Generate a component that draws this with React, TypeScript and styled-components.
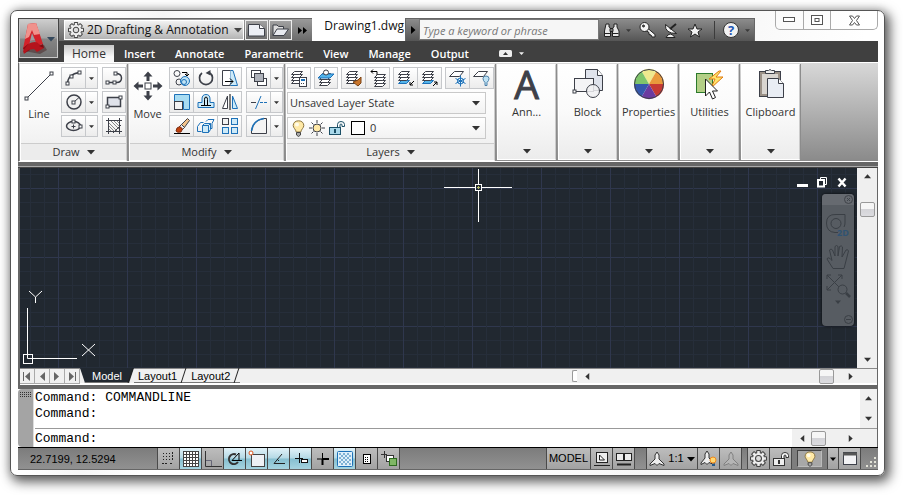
import React from "react";
import styled, { createGlobalStyle, css } from "styled-components";

const ui = `"Open Sans", "Noto Sans", sans-serif`;
const sys = `"Liberation Sans", Arial, sans-serif`;
const mono = `"Liberation Mono", "Courier New", monospace`;
const ink = "#3d4049";
const blue = "#1d71b8";

const GlobalStyle = createGlobalStyle`
  *, *::before, *::after { box-sizing: border-box; }
  body { margin: 0; background: #fff; font: 11px/16px ${ui}; color: #333; }
  button, input, select { font: inherit; color: inherit; margin: 0; padding: 0; border: 0; border-radius: 0; background: none; }
  svg { display: block; flex: none; }
`;

/* ---------- shell ---------- */

const Page = styled.div`
  display: flex;
  min-height: 100vh;
  padding: 10px 18px 19px 10px;
`;

const Frame = styled.main`
  flex: 1;
  min-width: 0;
  display: flex;
  flex-direction: column;
  padding: 0 6px 5px 7px;
  border: 1px solid #555;
  border-radius: 7px;
  background: linear-gradient(100deg, #fff 10%, #f6f6f6 16%, #fff 22%, #fff 60%, #f7f7f7 75%, #fff 90%);
  box-shadow: 3px 4px 12px 2px rgba(0, 0, 0, 0.62), 0 0 8px rgba(0, 0, 0, 0.12);
`;

const Header = styled.header`
  display: grid;
  grid-template-columns: 41px 1fr;
  grid-template-rows: 30px 21px;
`;

const AppButton = styled.button`
  grid-area: 1 / 1 / 3 / 2;
  z-index: 1;
  display: flex;
  align-items: center;
  justify-content: center;
  height: 41px;
  margin-top: 7px;
  border: 1px solid #444;
  box-shadow: inset 0 0 0 1px #c9c9c9;
  background: linear-gradient(#cfcfcf, #a2a2a2 48%, #858585 52%, #707070);
`;

const TitleRow = styled.div`
  grid-area: 1 / 2 / 2 / 3;
  display: flex;
  align-items: flex-end;
`;

const QuickBar = styled.div`
  display: flex;
  align-items: stretch;
  height: 23px;
  padding: 1px 0 1px 5px;
  border-top: 1px solid #666;
  background: linear-gradient(#9a9a9a, #6a6a6a);
`;

const SelectBox = styled.label<{ $look?: "bar" | "layer" }>`
  display: flex;
  align-items: center;
  height: 22px;
  margin-right: 8px;
  padding: 0 5px 0 2px;
  border: 1px solid #c9c9c9;
  background: linear-gradient(#fff, #f2f2f2);
  & > select {
    flex: 1;
    min-width: 0;
    appearance: none;
    outline: none;
  }
  ${(p) => p.$look === "layer" && "gap: 4px; padding-left: 4px;"}
  ${(p) =>
    p.$look === "bar" &&
    css`
      gap: 3px;
      width: 180px;
      height: 20px;
      margin: 0;
      padding: 0 1px 0 3px;
      border: 1px solid #fff;
      background: linear-gradient(#f2f2f2, #b4b4b4);
      color: #111;
      font-size: 12px;
    `}
`;

const BarButton = styled.button<{ $width?: number; $boxed?: boolean }>`
  display: flex;
  align-items: center;
  justify-content: center;
  width: ${(p) => p.$width ?? 20}px;
  ${(p) =>
    p.$boxed &&
    css`
      margin-left: 1px;
      border: 1px solid #eee;
      background: linear-gradient(#a2a2a2, #6e6e6e);
      width: 23px;
    `}
`;

const DocTitle = styled.h1`
  flex: 1;
  min-width: 0;
  margin: 0;
  height: 23px;
  padding-right: 1px;
  font: 400 12px/16px ${ui};
  color: #111;
  text-align: right;
  white-space: nowrap;
`;

const InfoBar = styled.div`
  display: flex;
  height: 23px;
  border: solid #666;
  border-width: 1px 1px 0 1px;
  background: linear-gradient(#8c8c8c, #555);
`;

const Search = styled.input`
  width: 180px;
  margin: 0 0 1px;
  padding: 3px 3px 0;
  border: 1px solid #777;
  background: #f6f6f6;
  outline: none;
  &::placeholder {
    color: #777;
    opacity: 1;
    font-style: italic;
  }
`;

const BarRule = styled.span`
  width: 1px;
  margin: 2px 6px;
  background: #3c3c3c;
`;

const WindowButtons = styled.div`
  align-self: flex-start;
  display: flex;
  height: 19px;
  margin-left: 20px;
  border: 1px solid #a9a9a9;
  border-top: 0;
  border-radius: 0 0 5px 5px;
`;

const WindowButton = styled.button<{ $wide?: boolean }>`
  display: flex;
  align-items: center;
  justify-content: center;
  width: ${(p) => (p.$wide ? 47 : 27)}px;
  & + & {
    border-left: 1px solid #a9a9a9;
  }
`;

const TabRow = styled.nav`
  grid-area: 2 / 1 / 3 / 3;
  display: flex;
  align-items: flex-end;
  padding-left: 46px;
  background: #404040;
`;

const RibbonTab = styled.button<{ $active?: boolean }>`
  height: 17px;
  padding: 0 10px;
  color: #fff;
  font-weight: 600;
  line-height: 17px;
  ${(p) =>
    p.$active &&
    css`
      padding: 0 8px;
      color: #333;
      font-weight: 400;
      font-size: 12px;
      background: linear-gradient(#c8c8c8, #f8f8f8 70%);
    `}
`;

const TabToggle = styled.button`
  display: flex;
  align-items: center;
  gap: 7px;
  height: 17px;
  margin-left: 20px;
`;

/* ---------- ribbon ---------- */

const Ribbon = styled.section`
  display: flex;
  gap: 2px;
  padding: 1px 0 0 1px;
  border: solid #fff;
  border-width: 1px 0;
  border-left: 1px solid #666;
  background: linear-gradient(#d8d8d8, #8a8a8a);
`;

const Panel = styled.section`
  display: flex;
  flex-direction: column;
  border: 1px solid #fff;
  border-right-color: #ccc;
  background: linear-gradient(#fff, #fafafa 50%, #ececec);
  box-shadow: 1px 0 0 #8c8c8c;
`;

const PanelBody = styled.div`
  display: flex;
  gap: 4px;
  height: 78px;
  padding: 2px 0 0;
`;

const PanelTitle = styled.button`
  display: flex;
  align-items: center;
  justify-content: center;
  gap: 7px;
  height: 17px;
  border-top: 1px solid #ccc;
  background: #ececec;
`;

const BigTool = styled.button<{ $width: number }>`
  display: flex;
  flex-direction: column;
  align-items: center;
  gap: 4px;
  width: ${(p) => p.$width}px;
  height: 60px;
  padding-top: 3px;
`;

const SlimPanel = styled.button`
  display: flex;
  flex-direction: column;
  align-items: center;
  width: 59px;
  height: 96px;
  padding: 3px 0 4px;
  border: 1px solid #fff;
  border-right-color: #ccc;
  background: linear-gradient(#fff, #fafafa 50%, #ececec);
  box-shadow: 1px 0 0 #8c8c8c;
  white-space: nowrap;
  & > span {
    margin-top: 4px;
  }
  & > svg:last-child {
    margin-top: auto;
  }
`;

const BigLetter = styled.b`
  height: 32px;
  font-weight: 400;
  font-size: 39px;
  line-height: 32px;
  -webkit-text-stroke: 1px ${ink};
  color: ${ink};
`;

const ToolColumn = styled.div`
  display: flex;
  flex-direction: column;
  gap: 2px;
`;

const ToolRow = styled.div<{ $spread?: boolean }>`
  display: flex;
  ${(p) => (p.$spread ? "justify-content: space-between;" : "gap: 4px;")}
`;

const ToolGroup = styled.div`
  display: flex;
  border: 1px solid #c6c8cb;
  & > * + * {
    border-left: 1px solid #c6c8cb;
  }
`;

const Tool = styled.button<{ $slim?: boolean }>`
  display: flex;
  align-items: center;
  justify-content: center;
  width: ${(p) => (p.$slim ? 12 : 24)}px;
  height: 20px;
  background: linear-gradient(#fff, #ececec);
  &:first-child {
    width: 23px;
  }
  &:only-child {
    width: 22px;
  }
`;

const LayerColumn = styled.div`
  display: flex;
  flex-direction: column;
  gap: 3px;
  width: 207px;
`;

const Swatch = styled.i`
  width: 14px;
  height: 14px;
  margin: 0 1px 0 2px;
  border: 1px solid #000;
  background: #fff;
`;

const Band = styled.div<{ $tall?: boolean }>`
  height: ${(p) => (p.$tall ? 6 : 4)}px;
  background: #666;
  ${(p) => p.$tall && "border-bottom: 1px solid #444; box-shadow: inset 0 -1px 0 #aaa;"}
`;

/* ---------- drawing area ---------- */

const Workspace = styled.section`
  flex: 1;
  min-height: 190px;
  display: flex;
  border: solid #666;
  border-width: 0 1px 0 2px;
`;

const minor = "#262e3a";
const major = "#2f374d";
const rules = (dir: string) =>
  `repeating-linear-gradient(${dir}, ${major} 0 1px, transparent 1px 14px, ${minor} 14px 15px, transparent 15px 28px, ${minor} 28px 29px, transparent 29px 41px, ${minor} 41px 42px, transparent 42px 55px, ${minor} 55px 56px, transparent 56px 69px)`;

const Canvas = styled.div`
  position: relative;
  flex: 1;
  min-width: 0;
  overflow: hidden;
  background-color: #212830;
  background-image: ${rules("to right")}, ${rules("to bottom")};
  background-position: -31px 0, 0 -49px;
  background-size: calc(100% + 69px) 100%, 100% calc(100% + 69px);
`;

const Crosshair = styled.svg`
  position: absolute;
  left: 424px;
  top: 1px;
`;

const Axes = styled.svg`
  position: absolute;
  left: 3px;
  bottom: 3px;
`;

const DocControls = styled.div`
  position: absolute;
  top: 8px;
  right: 10px;
  display: flex;
  gap: 9px;
  & > button {
    height: 12px;
  }
`;

const NavBar = styled.div`
  position: absolute;
  top: 26px;
  right: 3px;
  display: flex;
  flex-direction: column;
  align-items: center;
  width: 32px;
  height: 132px;
  border-radius: 4px;
  background: #575c62;
  box-shadow: 0 0 2px 1px #15191e;
`;

const NavButton = styled.button<{ $cap?: boolean }>`
  display: flex;
  justify-content: center;
  width: 100%;
  ${(p) =>
    p.$cap &&
    css`
      justify-content: flex-end;
      padding: 1px 1px 0;
      height: 11px;
      border-radius: 4px 4px 0 0;
      background: #666a70;
    `}
`;

const NavLabel = styled.text`
  font: 700 9px ${ui};
  fill: #2f5373;
`;

const VScroll = styled.div`
  display: flex;
  flex-direction: column;
  align-items: center;
  justify-content: space-between;
  width: 20px;
  padding: 5px 1px;
  background: #efefef;
`;

const VTrack = styled.div`
  flex: 1;
  padding-top: 22px;
`;

const Thumb = styled.button`
  display: block;
  width: 15px;
  height: 15px;
  border: 1px solid #999;
  border-radius: 2px;
  background: linear-gradient(#f6f6f6 45%, #d4d4d8 50%, #dcdce0);
`;

const ScrollArrow = styled.button`
  display: block;
`;

const SheetRow = styled.div`
  display: flex;
  height: 17px;
  border: solid #666;
  border-width: 0 1px 0 2px;
  background: #f0f0f0;
  box-shadow: inset 0 1px 0 #888, inset 0 -2px 0 #fff;
`;

const StepButton = styled.button`
  display: flex;
  align-items: center;
  justify-content: center;
  width: 15px;
  height: 15px;
  margin-top: 1px;
  border: solid #aaa;
  border-width: 0 1px 1px 0;
`;

const SheetTab = styled.button<{ $active?: boolean }>`
  position: relative;
  height: 15px;
  padding: 0 10px 0 4px;
  font: 11px/17px ${sys};
  color: #000;
  border-bottom: 1px solid #777;
  &::after {
    content: "";
    position: absolute;
    top: 0;
    right: 3px;
    height: 15px;
    border-right: 1px solid #222;
    transform: skewX(-18deg);
  }
  ${(p) =>
    p.$active &&
    css`
      padding: 0 12px 0 12px;
      color: #fff;
      background: #212830;
      clip-path: polygon(0 0, 100% 0, calc(100% - 5px) 100%, 5px 100%);
    `}
`;

const HScroll = styled.div`
  display: flex;
  align-items: center;
  width: 282px;
  margin: 1px 23px 2px auto;
`;

const HGrip = styled.span`
  width: 5px;
  height: 12px;
  margin-right: 7px;
  border: 1px solid #999;
  border-right: 0;
  border-radius: 2px 0 0 2px;
  background: #fff;
`;

const HTrack = styled.div<{ $end?: boolean }>`
  flex: 1;
  display: flex;
  justify-content: ${(p) => (p.$end ? "flex-end" : "flex-start")};
  padding: 0 13px 0 5px;
`;

/* ---------- command line ---------- */

const CommandPane = styled.section`
  display: flex;
  border: solid #666;
  border-width: 0 1px 0 0;
  background: #fff;
  font: 13px/16px ${mono};
  color: #000;
`;

const Gripper = styled.div`
  width: 16px;
  padding: 3px 2px;
  border-right: 1px solid #ddd;
  border-radius: 4px 0 0 4px;
  background: #a4a4a4;
`;

const CommandColumn = styled.div`
  flex: 1;
  min-width: 0;
  padding-left: 1px;
`;

const History = styled.div`
  display: flex;
  height: 40px;
  border-bottom: 1px solid #999;
  & > pre {
    flex: 1;
    margin: 0;
    padding-top: 1px;
    font: inherit;
  }
`;

const HistoryScroll = styled.div`
  display: flex;
  flex-direction: column;
  justify-content: space-between;
  align-items: center;
  width: 17px;
  padding: 6px 0;
  background: #f0f0f0;
`;

const Prompt = styled.label`
  display: flex;
  height: 18px;
  & > span {
    line-height: 20px;
  }
  & > input {
    flex: 1;
    min-width: 0;
    outline: none;
  }
`;

const PromptScroll = styled.div`
  display: flex;
  align-items: center;
  width: 85px;
  padding: 0 23px 0 7px;
  background: #f0f0f0;
`;

/* ---------- status bar ---------- */

const StatusBar = styled.footer`
  display: flex;
  height: 23px;
  border-top: 1px solid #000;
  border-bottom: 1px solid #666;
  background: linear-gradient(#7c7c7c, #919191);
  font: 11px/21px ${sys};
  color: #000;
`;

const Coordinates = styled.output`
  width: 139px;
  padding: 1px 0 0 12px;
`;

const StatusGroup = styled.div<{ $gap?: number }>`
  display: flex;
  margin-right: ${(p) => p.$gap ?? 0}px;
  border-right: 1px solid #4a4a4a;
`;

const StatusButton = styled.button<{ $on?: boolean; $width?: number; $dark?: boolean }>`
  display: flex;
  align-items: center;
  justify-content: center;
  gap: 3px;
  width: ${(p) => p.$width ?? 22}px;
  border-left: 1px solid #4a4a4a;
  background: ${(p) =>
    p.$on
      ? "linear-gradient(#e2f2f8, #b4d9e5 48%, #86bfd0 52%, #a6d4e0)"
      : p.$dark
        ? "#7e7e7e"
        : "linear-gradient(#bdbdbd, #a2a2a2)"};
`;

const Sunken = styled.span`
  display: flex;
  justify-content: center;
  width: 25px;
  height: 17px;
  border: 1px solid #444;
  border-right-color: #bbb;
  border-bottom-color: #bbb;
  background: #a8a8a8;
`;

const Spacer = styled.div`
  flex: 1;
`;

/* ---------- icons ---------- */

type IconProps = {
  w?: number;
  h?: number;
  color?: string;
  children: React.ReactNode;
};

const Icon = ({ w = 18, h = 18, color = ink, children }: IconProps) => (
  <svg width={w} height={h} viewBox={`0 0 ${w} ${h}`} fill="none" stroke={color} aria-hidden="true">
    {children}
  </svg>
);

const Arrow = ({ size = 8, color = "#333", dir = 0 }: { size?: number; color?: string; dir?: number }) => (
  <svg width={size} height={size} viewBox="0 0 8 8" aria-hidden="true">
    <path d="M0 2h8L4 6.5z" fill={color} transform={`rotate(${dir} 4 4)`} />
  </svg>
);

const Node = ({ x, y }: { x: number; y: number }) => <rect x={x - 1.5} y={y - 1.5} width="3" height="3" fill="#fff" />;

const Gear = ({ size = 16 }: { size?: number }) => (
  <svg width={size} height={size} viewBox="0 0 16 16" aria-hidden="true">
    <g fill="#444">
      {[0, 45, 90, 135].map((a) => (
        <rect key={a} x="5.8" y="0" width="4.4" height="16" rx="1" transform={`rotate(${a} 8 8)`} />
      ))}
    </g>
    <g fill="#eee">
      {[0, 45, 90, 135].map((a) => (
        <rect key={a} x="6.8" y="1" width="2.4" height="14" transform={`rotate(${a} 8 8)`} />
      ))}
    </g>
    <circle cx="8" cy="8" r="5.2" fill="#eee" />
    <circle cx="8" cy="8" r="2.8" fill="#ddd" stroke="#444" />
  </svg>
);

const Bulb = ({ w = 13, h = 17 }: { w?: number; h?: number }) => (
  <svg width={w} height={h} viewBox="0 0 13 17" aria-hidden="true">
    <path d="M6.5.8C3.200.8 1.200 2.800 1.200 5.600c0 2.300 2.600 3.700 3 6.400h4.600c.4-2.700 3-4.100 3-6.400C11.800 2.800 9.800.8 6.500.8z" fill="#ffe9a6" stroke="#8a7440" />
    <path d="M4.500 12.500h4V15l-2 1.500-2-1.500z" fill="#aaa" stroke="#444" />
    <ellipse cx="5" cy="4.500" rx="2" ry="2" fill="#fffbe8" />
  </svg>
);

const Lock = ({ fill = "#a9d8ea", color = "#1b4f66" }: { fill?: string; color?: string }) => (
  <Icon w={16} h={16} color={color}>
    <path d="M8.500 8V4.500q0-3 3.500-3t3.500 3V6.500h-2.500V5q0-1-1-1t-1 1v3" fill="#fff" />
    <rect x=".5" y="7.500" width="11" height="7" fill={fill} />
    <path d="M6 9v4" strokeWidth="2" />
  </Icon>
);

const Sheets = ({ x = 1, y = 2, tint = "#fff", top = ink }: { x?: number; y?: number; tint?: string; top?: string }) => (
  <g transform={`translate(${x} ${y})`}>
    <path d="M.5 12.5l3-3h8l-3 3z" fill={tint} stroke={top} />
    <path d="M.5 9.500l3-3h8l-3 3z" fill="#fff" />
    <path d="M.5 6.500l3-3h8l-3 3z" fill="#fff" />
    <path d="M.5 3.500l3-3h8l-3 3z" fill="#fff" />
  </g>
);

const LogoA = () => (
  <svg width="25" height="33" viewBox="0 0 25 33" aria-hidden="true">
    <path d="M2 29l16 3 7-4-3-5z" fill="#300" opacity=".35" />
    <path d="M6 2l8-1 7 21-6 2-2-6-5 1-2 9-5-1z" fill="#d3222a" />
    <path d="M6 2l8-1 4 11-6 1-2-5-3 7-4 2z" fill="#f0928c" />
    <path d="M1 26l5-4 2 6-5 3z" fill="#8c0f16" />
    <path d="M6 22q8-4 11 0l5 4-7 4-3-3-6 1-4 4-1-3z" fill="#b4141c" />
    <path d="M21 22l1 4-5-2z" fill="#7d0c12" />
    <path d="M10 11l3 7-5 1z" fill="#9aa0a2" />
  </svg>
);

const NewIcon = () => (
  <Icon w={17} h={14}>
    <path d="M.5 1.500h11l5 4v7.500h-16z" fill="#eceff5" />
    <path d="M11.500 1.500v4h5" fill="#fff" />
  </Icon>
);
const OpenIcon = () => (
  <Icon w={17} h={14}>
    <path d="M1 12.500V2h4l1.500 1.500h5V6" fill="#ddd" />
    <path d="M1 12.500L5 6h11.500L12 12.500z" fill="#e8eaef" />
  </Icon>
);
const Chevrons = () => (
  <svg width="9" height="7" viewBox="0 0 9 7" aria-hidden="true">
    <path d="M0 0l4 3.500L0 7zM5 0l4 3.500L5 7z" fill="#000" />
  </svg>
);
const Binoculars = () => (
  <Icon w={17} h={16} color="#222">
    <path d="M3 2h3v3l1.500 1v8.500h-6V9zM11 2h3v3l2 4v5.500H9.500V6L11 5z" fill="#e6e6e6" />
    <path d="M7 6.500h3v3H7z" fill="#777" />
    <path d="M1.500 11.500h6m2 0h6" />
  </Icon>
);
const KeyIcon = () => (
  <Icon w={17} h={16} color="#222">
    <path d="M8.500 6L16 12.500v2.500h-3l-1-2-2-.5v-2L6 8z" fill="#f2f2f2" />
    <circle cx="5.500" cy="5" r="4.500" fill="#f4f4f4" />
    <circle cx="4.500" cy="4" r="1" fill="#555" />
  </Icon>
);
const DishIcon = () => (
  <Icon w={15} h={16} color="#222">
    <path d="M2 15.500q4-7 9 0z" fill="#eee" />
    <path d="M1.500 2.500q-1 9 11 9z" fill="#f6f6f6" />
    <path d="M6 7l6-5" strokeWidth="2" />
  </Icon>
);
const StarIcon = () => (
  <Icon w={16} h={15} color="#222">
    <path d="M8 1l2 5h5l-4 3 1.500 5L8 11l-4.500 3L5 9 1 6h5z" fill="#f2f2f2" />
  </Icon>
);
const HelpMark = styled.span`
  display: grid;
  place-items: center;
  width: 16px;
  height: 16px;
  border: 1px solid #333;
  border-radius: 50%;
  background: #f2f2f2;
  color: #1f57b5;
  font: 700 13px/14px ${ui};
`;

const drawRows = [
  {
    name: "Arc",
    icon: (
      <Icon>
        <path d="M2.500 14.500Q3 5 14.500 3.500" strokeWidth="1.500" />
        <Node x={2.5} y={14.5} />
        <Node x={6.5} y={7.5} />
        <Node x={14.5} y={3.5} />
      </Icon>
    ),
    side: "Polyline",
    sideIcon: (
      <Icon>
        <path d="M2.500 13.500h9q5 0 5-4.500t-6-4.500" strokeWidth="1.500" />
        <Node x={2.5} y={13.5} />
        <Node x={9.5} y={13.5} />
        <Node x={10.5} y={4.5} />
      </Icon>
    ),
  },
  {
    name: "Circle",
    icon: (
      <Icon>
        <circle cx="9" cy="9" r="7" fill="#f2f2f2" strokeWidth="1.500" />
        <path d="M9 9l5-4.500" />
        <Node x={8.5} y={9.5} />
      </Icon>
    ),
    side: "Rectangle",
    sideIcon: (
      <Icon>
        <rect x="2.500" y="4.500" width="13" height="9" fill="#dfe2ea" strokeWidth="1.500" />
        <Node x={2.5} y={13.5} />
        <Node x={15.5} y={4.5} />
      </Icon>
    ),
  },
  {
    name: "Ellipse",
    icon: (
      <Icon>
        <ellipse cx="8.500" cy="9" rx="7" ry="4.500" fill="#eee" strokeWidth="1.500" />
        <path d="M6.500 9.500h4m-2-2v4" />
        <Node x={8.5} y={4.5} />
        <Node x={15.5} y={9.5} />
      </Icon>
    ),
    side: "Hatch",
    sideIcon: (
      <Icon>
        <path d="M1 3.500h16M1 14.500h16M3.500 1v16M14.500 1v16" />
        <path d="M4 6l8 8M4 9l5 5M4 12l2 2M6 4l8 8M9 4l5 5M12 4l2 2" stroke="#888" />
        <path d="M8 16l8-8" />
      </Icon>
    ),
  },
];

const modifyRows: { tools: [string, React.ReactNode][]; side: string; sideIcon: React.ReactNode }[] = [
  {
    tools: [
      ["Copy", (
        <Icon>
          <circle cx="4" cy="4.500" r="3" />
          <circle cx="6" cy="13" r="3" />
          <circle cx="12" cy="12" r="4.500" fill="#bfe3f5" stroke={blue} />
          <circle cx="11" cy="13" r="2.500" stroke={blue} />
          <path d="M9 3.500h5V7m-2-2l2 2 2-2" stroke="#000" />
        </Icon>
      )],
      ["Rotate", (
        <Icon>
          <path d="M5 4A6.500 6.500 0 1 0 13 4" strokeWidth="1.700" />
          <path d="M10.500 1.500v5.500l5-3z" fill={ink} stroke="none" transform="rotate(180 12 4)" />
        </Icon>
      )],
      ["Stretch", (
        <Icon>
          <path d="M9.500 1.500H12l4.500 15h-7z" fill="#cdeaf8" stroke={blue} />
          <path d="M9.500 16.500h-8v-15h8" fill="#fff" />
          <path d="M4 12.500h8m-3-3l3 3-3 3" stroke="#000" />
        </Icon>
      )],
    ],
    side: "Draw order",
    sideIcon: (
      <Icon>
        <rect x="1.500" y="1.500" width="9" height="7" fill="#fff" />
        <rect x="7.500" y="9.500" width="9" height="7" fill="#fff" />
        <rect x="4.500" y="4.500" width="9" height="8" fill="#aeb2ba" />
      </Icon>
    ),
  },
  {
    tools: [
      ["Scale", (
        <Icon>
          <path d="M1.500 1.500h15v15h-6v-8h-9z" fill="#a8dcf2" stroke={blue} />
          <rect x="1.500" y="8.500" width="8" height="8" fill="#f4f4f4" />
        </Icon>
      )],
      ["Offset", (
        <Icon>
          <path d="M1 14.500v-5h4V6q0-4.500 4-4.500T13 6v3.500h4v5z" fill="#cdeaf8" stroke={blue} />
          <path d="M4 12.500h10M4 12.500h3.500v-6Q7.500 4 9 4t1.500 2.500v6" stroke="#000" />
        </Icon>
      )],
      ["Mirror", (
        <Icon>
          <path d="M6.500 3v12.500h-5z" fill="#fff" />
          <path d="M11.500 3v12.500h5z" fill="#cdeaf8" stroke={blue} />
          <path d="M9 1v16" stroke="#000" />
        </Icon>
      )],
    ],
    side: "Trim",
    sideIcon: (
      <Icon>
        <path d="M1 9.500h5" />
        <path d="M10 9.500h8" stroke={blue} strokeDasharray="3 1" />
        <path d="M5.500 16L11 3" stroke={blue} />
      </Icon>
    ),
  },
  {
    tools: [
      ["Erase", (
        <Icon>
          <path d="M1 16.500h16" stroke="#000" />
          <path d="M8 8l6.500-6.500 2 2L11 11z" fill="#f2c28b" />
          <path d="M8.500 7.500l3 3-2 2-3-3z" fill="#eee" />
          <path d="M4 11l3-1.500 2.500 2.500L8 15q-4 1-5-1z" fill="#c2410c" stroke="#7c2d12" />
        </Icon>
      )],
      ["Array 3D", (
        <Icon color={blue}>
          <path d="M5.500 8.500l2-2h6l-2 2v7h-6zM5.500 8.500h6M13.500 6.500v6l-2 3" fill="#cdeaf8" />
          <path d="M.5 9.500l3-4h3m-6 4v5h4M9 4.500l2-2h6l-2 4v5h-1" fill="none" />
        </Icon>
      )],
      ["Array", (
        <Icon>
          <rect x="1.500" y="1.500" width="6" height="6" fill="#f2f2f2" />
          <g fill="#cdeaf8" stroke={blue}>
            <rect x="10.500" y="1.500" width="6" height="6" />
            <rect x="1.500" y="10.500" width="6" height="6" />
            <rect x="10.500" y="10.500" width="6" height="6" />
          </g>
        </Icon>
      )],
    ],
    side: "Fillet",
    sideIcon: (
      <Icon>
        <path d="M1.500 16.500V14Q3 3 14 1.500h2.500v15z" fill="#f4f4f4" />
        <path d="M1.500 14Q3 3 14 1.500" stroke={blue} strokeWidth="1.500" />
      </Icon>
    ),
  },
];

const layerGroups: [string, React.ReactNode][][] = [
  [["Layer properties", (
    <Icon>
      <Sheets />
      <rect x="9.500" y="8.500" width="7" height="9" fill="#fff" />
      <rect x="11" y="10" width="4" height="2" fill={blue} stroke="none" />
      <path d="M11 14.500h4" strokeDasharray="1 1" />
    </Icon>
  )]],
  [["Make current", (
    <Icon>
      <Sheets x={2} y={4} />
      <path d="M1 9l4-4h12l-4 4z" fill="#53b4ea" stroke={blue} />
      <circle cx="9" cy="3.500" r="2.500" fill="#fff" />
    </Icon>
  )]],
  [
    ["Match layer", (
      <Icon>
        <Sheets />
        <path d="M16 8l-3 3-5 2 5 4 3-3z" fill="#c8752c" stroke="#7a4213" />
      </Icon>
    )],
    ["Previous layer", (
      <Icon>
        <Sheets x={5} y={5} />
        <path d="M8 6V2.500H2M4 .5l-2 2 2 2" stroke="#000" />
      </Icon>
    )],
  ],
  [
    ["Isolate", (
      <Icon>
        <Sheets tint="#53b4ea" top={blue} />
        <path d="M17 12l-4 4m0-3v3h3" stroke="#000" />
      </Icon>
    )],
    ["Unisolate", (
      <Icon>
        <Sheets tint="#53b4ea" top={blue} />
        <path d="M12 17l4-4m-3 0h3v3" stroke="#000" />
      </Icon>
    )],
  ],
  [
    ["Freeze", (
      <Icon>
        <path d="M.5 7.500l5-5h9l-4 5z" fill="#fff" />
        <circle cx="11.500" cy="12" r="4" fill="#eef7fc" stroke="none" />
        <path d="M11.500 6.500v11M6.500 9.500l10 5M16.500 9.500l-10 5" stroke={blue} />
        <circle cx="11.500" cy="12" r="3" stroke={blue} />
      </Icon>
    )],
    ["Layer off", (
      <Icon>
        <path d="M.5 7.500l5-5h9l-4 5z" fill="#fff" />
        <path d="M12 13.500q-2-2-2-4 0-2.500 3-2.500t3 2.500q0 2-2 4v3h-2z" fill="#bfe3f5" stroke="#4b7fa8" />
      </Icon>
    )],
  ],
];

const LineIcon = () => (
  <Icon w={32} h={32}>
    <path d="M4 28L28 4" />
    <Node x={3.5} y={28.5} />
    <Node x={28.5} y={3.5} />
  </Icon>
);
const MoveIcon = () => (
  <Icon w={32} h={32}>
    <rect x="13" y="13" width="6" height="6" fill="#fff" />
    {[0, 90, 180, 270].map((a) => (
      <path key={a} d="M16 1.500l4.500 5h-3V11h-3V6.500h-3z" fill={ink} stroke="none" transform={`rotate(${a} 16 16)`} />
    ))}
  </Icon>
);
const BlockIcon = () => (
  <Icon w={32} h={32}>
    <path d="M13.500 1.500h12l5 6v15h-17z" fill="#dfe3ec" />
    <path d="M25.500 1.500v6h5" fill="#fff" />
    <rect x="2.500" y="10.500" width="19" height="13" fill="#f4f4f6" />
    <circle cx="21" cy="23" r="6.500" fill="#f0f0f2" fillOpacity=".85" />
    <Node x={2.5} y={23.5} />
  </Icon>
);
const wheel = ["#efe98e", "#e99a3c", "#c63a34", "#6b3aa0", "#3558ad", "#7fc56b"];
const WheelIcon = () => (
  <Icon w={32} h={32}>
    {wheel.map((c, i) => (
      <path key={c} d="M16 16L8.500 3A15 15 0 0 1 23.500 3z" fill={c} stroke="none" transform={`rotate(${i * 60} 16 16)`} />
    ))}
    <circle cx="16" cy="16" r="14.500" stroke="#3f3f46" />
  </Icon>
);
const UtilIcon = () => (
  <Icon w={32} h={32}>
    <rect x="2.500" y="5.500" width="16" height="19" fill="#b3cf86" stroke="#2c7a2c" />
    <path d="M25 3l-10 8h6l-4 9 12-11h-7l5-6z" fill="#ffe36a" stroke="#e07a10" />
    <path d="M11.500 11v17l4-4 3 7 3-1.500-3-6.500h5z" fill="#fff" stroke="#222" />
  </Icon>
);
const ClipIcon = () => (
  <Icon w={32} h={32}>
    <rect x="4.500" y="3.500" width="21" height="25" fill="#9b9187" />
    <rect x="7" y="6" width="16" height="20" fill="#d9d5d0" stroke="none" />
    <path d="M10.500 5.500v-3h3q1.500-2 3 0h3v3z" fill="#eee" />
    <path d="M12.500 10.500h11l5 5v14h-16z" fill="#e9edf4" />
    <path d="M23.500 10.500v5h5" fill="#fff" />
  </Icon>
);

const Person = ({ color = "#333", fill = "#eee" }: { color?: string; fill?: string }) => (
  <Icon w={16} h={16} color={color}>
    <path d="M8 1l2 3v4l5 5v1.500l-5-2-2 2-2-2-5 2V13l5-5V4z" fill={fill} />
  </Icon>
);

const snaps: [string, boolean, React.ReactNode][] = [
  ["Snap", false, (
    <Icon color="#222">
      {[3.5, 6.5, 9.5].map((y) => <path key={y} d={`M3 ${y}h9`} strokeDasharray="1 2" />)}
      <path d="M2 13.500h6M12.500 2v9M10 13.500h3" strokeDasharray="2 1" />
    </Icon>
  )],
  ["Grid", true, (
    <Icon color="#444">
      <rect x="1.500" y="1.500" width="15" height="15" fill="#fff" />
      <path d="M4.500 1v16M7.500 1v16M10.500 1v16M13.500 1v16M1 4.500h16M1 7.500h16M1 10.500h16M1 13.500h16" />
    </Icon>
  )],
  ["Ortho", false, (
    <Icon color="#333">
      <path d="M1.500 1v15.500H18" />
      <path d="M2 10.500h5.500V16" stroke="#667" />
    </Icon>
  )],
  ["Polar", true, (
    <Icon color="#333">
      <path d="M10 4.500A5 5 0 1 0 12 12" strokeWidth="2" />
      <path d="M6 10.500L13 3v7.500M6 10.500h10" stroke="#000" />
    </Icon>
  )],
  ["Object snap", true, (
    <Icon color="#444">
      <rect x="3.500" y="4.500" width="13" height="12" fill="#eef0f4" />
      <circle cx="3" cy="3" r="2" fill="#fff" stroke="#e0541c" />
    </Icon>
  )],
  ["Object snap tracking", true, (
    <Icon color="#222">
      <path d="M12 4L4 13.500h11" />
      <path d="M7 9l2 2" />
    </Icon>
  )],
  ["Dynamic UCS", true, (
    <Icon color="#111">
      <path d="M7.500 3v10M3 8.500h8" />
      <rect x="9.500" y="9.500" width="6" height="3" fill="#fff" />
    </Icon>
  )],
  ["Dynamic input", false, (
    <Icon color="#000">
      <path d="M8.500 3v12M3 9h12" />
      <path d="M8 9h7M8.500 9v6" strokeWidth="2" />
    </Icon>
  )],
  ["Transparency", true, (
    <Icon color={blue}>
      <rect x="1.500" y="1.500" width="15" height="15" rx="1" fill="#dff0fa" />
      {[4, 6, 8, 10, 12, 14].map((y, i) => (
        <path key={y} d={`M${i % 2 ? 5 : 3} ${y}h11`} stroke="#7fb2d4" strokeWidth="2" strokeDasharray="2 2" />
      ))}
    </Icon>
  )],
  ["Quick properties", false, (
    <Icon color="#000">
      <rect x="5.500" y="4.500" width="7" height="9" fill="#fff" />
      <path d="M7 7.500h4M7 9.500h4M7 11.500h4" strokeDasharray="1 1" />
    </Icon>
  )],
  ["Selection cycling", false, (
    <Icon color="#333">
      <path d="M1 4.500h6M4.500 1v7" />
      <rect x="6.500" y="5.500" width="7" height="6" fill="#fff" />
      <rect x="9.500" y="8.500" width="7" height="7" fill="#7fb765" stroke="#2d6a1f" />
    </Icon>
  )],
];

/* ---------- page ---------- */

const TopBar = () => (
  <Header>
    <AppButton aria-label="Application menu">
      <LogoA />
      <Arrow color="#34485c" />
    </AppButton>
    <TitleRow>
      <QuickBar>
        <SelectBox $look="bar">
          <Gear />
          <select aria-label="Workspace">
            <option>2D Drafting &amp; Annotation</option>
          </select>
          <Arrow color="#444" />
        </SelectBox>
        <BarButton $boxed aria-label="New"><NewIcon /></BarButton>
        <BarButton $boxed aria-label="Open"><OpenIcon /></BarButton>
        <BarButton aria-label="More"><Chevrons /></BarButton>
      </QuickBar>
      <DocTitle>Drawing1.dwg</DocTitle>
      <InfoBar>
        <BarButton $width={13} aria-label="Collapse search"><Arrow dir={-90} color="#000" /></BarButton>
        <Search aria-label="Search" placeholder="Type a keyword or phrase" />
        <BarButton $width={25} aria-label="Find"><Binoculars /></BarButton>
        <BarButton $width={9} aria-label="Find options"><Arrow size={5} color="#3a3a3a" /></BarButton>
        <BarButton $width={28} aria-label="Subscription"><KeyIcon /></BarButton>
        <BarButton $width={21} aria-label="Communication"><DishIcon /></BarButton>
        <BarButton $width={26} aria-label="Favorites"><StarIcon /></BarButton>
        <BarRule />
        <BarButton $width={20} aria-label="Help"><HelpMark>?</HelpMark></BarButton>
        <BarButton $width={13} aria-label="Help options"><Arrow size={5} color="#3a3a3a" /></BarButton>
      </InfoBar>
      <WindowButtons>
        <WindowButton aria-label="Minimize">
          <Icon w={13} h={6} color="#555"><rect x=".5" y=".5" width="11" height="4" fill="#fff" /></Icon>
        </WindowButton>
        <WindowButton aria-label="Restore">
          <Icon w={13} h={10} color="#555">
            <rect x=".5" y=".5" width="11" height="9" fill="#fff" />
            <rect x="4" y="3.500" width="4" height="3" />
          </Icon>
        </WindowButton>
        <WindowButton $wide aria-label="Close">
          <Icon w={13} h={11} color="#555">
            <path d="M1.500 1h3l2 2.500 2-2.500h3L8.500 5.500l3 4.500h-3l-2-2.500-2 2.500h-3l3-4.500z" fill="#fff" />
          </Icon>
        </WindowButton>
      </WindowButtons>
    </TitleRow>
    <TabRow>
      <RibbonTab $active>Home</RibbonTab>
      {["Insert", "Annotate", "Parametric", "View", "Manage", "Output"].map((t) => (
        <RibbonTab key={t}>{t}</RibbonTab>
      ))}
      <TabToggle aria-label="Minimize ribbon">
        <svg width="13" height="8" viewBox="0 0 13 8" aria-hidden="true">
          <rect width="13" height="7" rx="1.500" fill="#eee" />
          <path d="M4 5l2.500-3L9 5z" fill="#333" />
        </svg>
        <Arrow size={5} color="#eee" />
      </TabToggle>
    </TabRow>
  </Header>
);

const Small = () => <Arrow size={5} />;

const RibbonBar = () => (
  <Ribbon>
    <Panel>
      <PanelBody>
        <BigTool $width={36}><LineIcon /><span>Line</span></BigTool>
        <ToolColumn>
          {drawRows.map((r) => (
            <ToolRow key={r.name}>
              <ToolGroup>
                <Tool aria-label={r.name}>{r.icon}</Tool>
                <Tool $slim aria-label={`${r.name} options`}><Small /></Tool>
              </ToolGroup>
              <ToolGroup><Tool aria-label={r.side}>{r.sideIcon}</Tool></ToolGroup>
            </ToolRow>
          ))}
        </ToolColumn>
      </PanelBody>
      <PanelTitle>Draw <Arrow /></PanelTitle>
    </Panel>
    <Panel>
      <PanelBody>
        <BigTool $width={35}><MoveIcon /><span>Move</span></BigTool>
        <ToolColumn>
          {modifyRows.map((r) => (
            <ToolRow key={r.side}>
              <ToolGroup>
                {r.tools.map(([name, icon]) => <Tool key={name} aria-label={name}>{icon}</Tool>)}
              </ToolGroup>
              <ToolGroup>
                <Tool aria-label={r.side}>{r.sideIcon}</Tool>
                <Tool $slim aria-label={`${r.side} options`}><Small /></Tool>
              </ToolGroup>
            </ToolRow>
          ))}
        </ToolColumn>
      </PanelBody>
      <PanelTitle>Modify <Arrow /></PanelTitle>
    </Panel>
    <Panel>
      <PanelBody>
        <LayerColumn>
          <ToolRow $spread>
            {layerGroups.map((g) => (
              <ToolGroup key={g[0][0]}>
                {g.map(([name, icon]) => <Tool key={name} aria-label={name}>{icon}</Tool>)}
              </ToolGroup>
            ))}
          </ToolRow>
          <SelectBox>
            <select aria-label="Layer state">
              <option>Unsaved Layer State</option>
            </select>
            <Arrow />
          </SelectBox>
          <SelectBox $look="layer">
            <Bulb />
            <Icon w={16} h={16}>
              <path d="M8 0v3M8 13v3M0 8h3M13 8h3M2.500 2.500l2 2M11.500 11.500l2 2M13.500 2.500l-2 2M2.500 13.500l2-2" />
              <circle cx="8" cy="8" r="4" fill="#ffe9a6" />
            </Icon>
            <Lock />
            <Swatch />
            <select aria-label="Layer">
              <option>0</option>
            </select>
            <Arrow />
          </SelectBox>
        </LayerColumn>
      </PanelBody>
      <PanelTitle>Layers <Arrow /></PanelTitle>
    </Panel>
    <SlimPanel><BigLetter aria-hidden="true">A</BigLetter><span>Ann...</span><Arrow /></SlimPanel>
    <SlimPanel><BlockIcon /><span>Block</span><Arrow /></SlimPanel>
    <SlimPanel><WheelIcon /><span>Properties</span><Arrow /></SlimPanel>
    <SlimPanel><UtilIcon /><span>Utilities</span><Arrow /></SlimPanel>
    <SlimPanel><ClipIcon /><span>Clipboard</span><Arrow /></SlimPanel>
  </Ribbon>
);

const DrawingArea = () => (
  <Workspace>
    <Canvas>
      <Crosshair width="70" height="54" viewBox="0 0 70 54" fill="none" stroke="#fff" aria-hidden="true">
        <path d="M0 18.500h31M37 18.500h31M34.500 0v15M34.500 22v31" />
        <rect x="31.500" y="15.500" width="6" height="6" />
        <path d="M33 18.500h3M34.500 17v3" stroke="#b5bc6a" />
      </Crosshair>
      <Axes width="76" height="76" viewBox="0 0 76 76" fill="none" stroke="#fff" aria-hidden="true">
        <path d="M4.500 19v50.500H54" />
        <rect x=".5" y="65.500" width="9" height="9" />
        <path d="M6 2l6.500 6L19 2M12.500 8v6" />
        <path d="M59 55l13 12M72 55L59 67" />
      </Axes>
      <DocControls>
        <button aria-label="Minimize drawing">
          <svg width="11" height="12" viewBox="0 0 11 12"><path d="M0 8h11v3H0z" fill="#fff" /></svg>
        </button>
        <button aria-label="Restore drawing">
          <Icon w={11} h={12} color="#fff">
            <path d="M3.500 3V1.500h6v7H8" />
            <path d="M1 4h6v6.500H1z" strokeWidth="2" />
          </Icon>
        </button>
        <button aria-label="Close drawing">
          <Icon w={10} h={12} color="#fff"><path d="M1.500 2.500l7 8M8.500 2.500l-7 8" strokeWidth="2.500" /></Icon>
        </button>
      </DocControls>
      <NavBar>
        <NavButton $cap aria-label="Close navigation bar">
          <Icon w={9} h={9} color="#3f444a"><circle cx="4.500" cy="4.500" r="4" /><path d="M3 3l3 3M6 3L3 6" /></Icon>
        </NavButton>
        <NavButton aria-label="Steering wheel">
          <Icon w={26} h={36} color="#3a3f45">
            <path d="M10 27.500Q1.500 27 1.500 18T11 9.500h9V18q0 2-1 4M10 27.500h3" />
            <circle cx="11" cy="18.500" r="5" />
            <NavLabel x="12" y="31" stroke="none">2D</NavLabel>
          </Icon>
        </NavButton>
        <NavButton aria-label="Pan">
          <Icon w={26} h={30} color="#3a3f45">
            <path d="M8 27.500L2 18q1-3 5 1.500L4.500 9q1.500-2 3 0L10 15V5.500q1.500-2 3 0V15l1.500-9.500q2-1.500 3 .5L17 16l4-7q2-1 2.500 1L19 27.500z" />
          </Icon>
        </NavButton>
        <NavButton aria-label="Zoom">
          <Icon w={26} h={28} color="#3a3f45">
            <path d="M2 4l15 15M17 4L2 19M2 8V4h4M13 4h4v4M2 15v4h4" />
            <circle cx="17.500" cy="18.500" r="4.500" fill="#575c62" />
            <path d="M21 22l4 4" strokeWidth="2.500" />
          </Icon>
        </NavButton>
        <NavButton aria-label="Zoom options"><Arrow size={6} color="#3a3f45" /></NavButton>
        <NavButton aria-label="Navigation bar options">
          <Icon w={30} h={20} color="#3a3f45"><circle cx="25.500" cy="14.500" r="4" /><path d="M23 14.500h5" /></Icon>
        </NavButton>
      </NavBar>
    </Canvas>
    <VScroll>
      <ScrollArrow aria-label="Scroll up"><Arrow size={7} dir={180} /></ScrollArrow>
      <VTrack><Thumb aria-label="Vertical position" /></VTrack>
      <ScrollArrow aria-label="Scroll down"><Arrow size={7} /></ScrollArrow>
    </VScroll>
  </Workspace>
);

const Step = ({ label, back, bar }: { label: string; back?: boolean; bar?: boolean }) => (
  <StepButton aria-label={label}>
    <svg width="8" height="9" viewBox="0 0 8 9" aria-hidden="true">
      <g fill="#666" transform={back ? "translate(8 0) scale(-1 1)" : undefined}>
        <path d="M1 0l5 4.500L1 9z" />
        {bar && <path d="M7 0h1v9H7z" />}
      </g>
    </svg>
  </StepButton>
);

const Sheetbar = () => (
  <SheetRow>
    <Step label="First layout" back bar />
    <Step label="Previous layout" back />
    <Step label="Next layout" />
    <Step label="Last layout" bar />
    <SheetTab $active>Model</SheetTab>
    <SheetTab>Layout1</SheetTab>
    <SheetTab>Layout2</SheetTab>
    <HScroll>
      <HGrip />
      <ScrollArrow aria-label="Scroll left"><Arrow size={7} dir={90} /></ScrollArrow>
      <HTrack $end><Thumb aria-label="Horizontal position" /></HTrack>
      <ScrollArrow aria-label="Scroll right"><Arrow size={7} dir={-90} /></ScrollArrow>
    </HScroll>
  </SheetRow>
);

const CommandLine = () => (
  <CommandPane>
    <Gripper>
      <svg width="12" height="6" viewBox="0 0 12 6" stroke="#333" strokeDasharray="1 1" aria-hidden="true">
        <path d="M0 .5h12M0 2.500h12M0 4.500h12" />
      </svg>
    </Gripper>
    <CommandColumn>
      <History>
        <pre>{"Command: COMMANDLINE\nCommand:"}</pre>
        <HistoryScroll>
          <ScrollArrow aria-label="Scroll history up"><Arrow size={7} dir={180} /></ScrollArrow>
          <ScrollArrow aria-label="Scroll history down"><Arrow size={7} /></ScrollArrow>
        </HistoryScroll>
      </History>
      <Prompt>
        <span>Command:</span>
        <input />
        <PromptScroll>
          <ScrollArrow aria-label="Scroll prompt left"><Arrow size={7} dir={90} /></ScrollArrow>
          <HTrack><Thumb aria-label="Prompt position" /></HTrack>
          <ScrollArrow aria-label="Scroll prompt right"><Arrow size={7} dir={-90} /></ScrollArrow>
        </PromptScroll>
      </Prompt>
    </CommandColumn>
  </CommandPane>
);

const Status = () => (
  <StatusBar>
    <Coordinates>22.7199, 12.5294</Coordinates>
    <StatusGroup>
      {snaps.map(([name, on, icon]) => (
        <StatusButton key={name} $on={on} aria-label={name} aria-pressed={on}>{icon}</StatusButton>
      ))}
    </StatusGroup>
    <Spacer />
    <StatusGroup $gap={11}>
      <StatusButton $width={44}>MODEL</StatusButton>
      <StatusButton aria-label="Quick view layouts">
        <Icon color="#222">
          <rect x="3.500" y="2.500" width="11" height="10" fill="#eee" />
          <path d="M6.500 5v5h5z" fill="#fff" />
          <path d="M1 15.500h16" />
        </Icon>
      </StatusButton>
      <StatusButton aria-label="Quick view drawings">
        <Icon color="#222">
          <rect x="1.500" y="3.500" width="7" height="7" fill="#eee" />
          <rect x="9.500" y="3.500" width="7" height="7" fill="#eee" />
          <path d="M2 14.500h14" strokeWidth="2" />
        </Icon>
      </StatusButton>
    </StatusGroup>
    <StatusGroup $gap={5}>
      <StatusButton $width={51}><Person />1:1<Arrow color="#000" /></StatusButton>
      <StatusButton aria-label="Annotation visibility">
        <Icon color="#333">
          <path d="M7 1l2 3v4l5 5v1.500l-5-2-2 2-2-2-4 2V13l4-5V4z" fill="#eee" />
          <circle cx="13" cy="10" r="3" fill="#ffd873" stroke="#ee8a1c" />
          <path d="M12 15h3" stroke="#245a8c" strokeWidth="2" />
        </Icon>
      </StatusButton>
      <StatusButton aria-label="Auto scale"><Person color="#808080" fill="#b5b5b5" /></StatusButton>
    </StatusGroup>
    <StatusGroup>
      <StatusButton aria-label="Workspace switching"><Gear size={17} /></StatusButton>
      <StatusButton aria-label="Lock toolbars"><Lock fill="#eee" color="#333" /></StatusButton>
      <StatusButton $dark $width={36} aria-label="Hardware acceleration">
        <Sunken><Bulb w={12} h={16} /></Sunken>
      </StatusButton>
      <StatusButton $width={11} aria-label="Status bar menu"><Arrow size={6} color="#000" /></StatusButton>
      <StatusButton aria-label="Clean screen">
        <Icon w={16} h={16}>
          <rect x="1.500" y="1.500" width="13" height="12" fill="#f2f2f4" />
          <path d="M1 3h14" stroke="#555" strokeWidth="3" />
        </Icon>
      </StatusButton>
    </StatusGroup>
    <svg width="17" height="21" viewBox="0 0 17 21" fill="#e3e3d8" aria-hidden="true">
      {[[13, 9], [9, 13], [13, 13], [5, 17], [9, 17], [13, 17]].map(([x, y]) => (
        <rect key={`${x}-${y}`} x={x} y={y} width="2" height="2" />
      ))}
    </svg>
  </StatusBar>
);

export default function App() {
  return (
    <>
      <GlobalStyle />
      <Page>
        <Frame>
          <TopBar />
          <RibbonBar />
          <Band $tall />
          <DrawingArea />
          <Sheetbar />
          <Band />
          <CommandLine />
          <Status />
        </Frame>
      </Page>
    </>
  );
}
